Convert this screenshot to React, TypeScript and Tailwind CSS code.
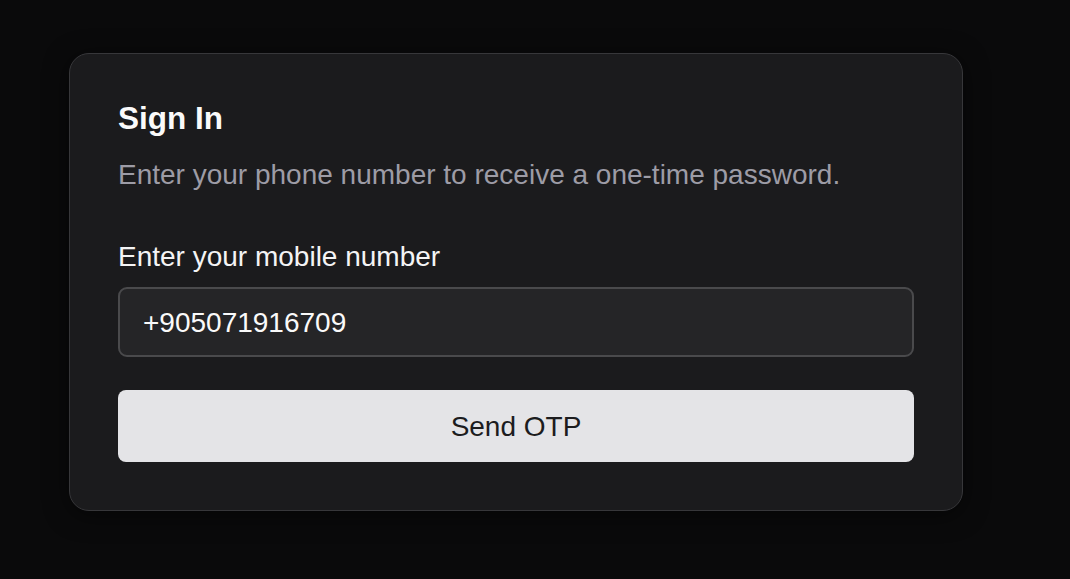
export default function App() {
  return (
    <div
      className="min-h-screen w-full bg-[#0a0a0b] pt-[53px] pl-[69px]"
      style={{ fontFamily: '"Liberation Sans", Arial, sans-serif' }}
    >
      <div className="w-[894px] rounded-[20px] border border-[#37373a] bg-[#1b1b1d] px-[48px] pt-[49px] pb-[48px] shadow-[0_4px_24px_rgba(0,0,0,0.5)]">
        <h1 className="text-[31.5px] leading-[31px] font-bold text-[#fafafa]">Sign In</h1>
        <p className="mt-[20px] text-[28px] leading-[42px] text-[#9d9ca6]">
          Enter your phone number to receive a one-time password.
        </p>
        <label className="mt-[40px] block text-[28px] leading-[42px] text-[#f4f4f5]">
          Enter your mobile number
        </label>
        <div className="mt-[9px] flex h-[70px] items-center rounded-[9px] border-2 border-[#4a4a4c] bg-[#252527] px-[23px] pt-[1px] text-[28px] text-[#fafafa]">
          +905071916709
        </div>
        <button className="mt-[33px] flex h-[72px] w-full items-center justify-center rounded-[8px] bg-[#e4e4e7] pt-[2px] text-[28px] text-[#1c1c1e]">
          Send OTP
        </button>
      </div>
    </div>
  )
}
